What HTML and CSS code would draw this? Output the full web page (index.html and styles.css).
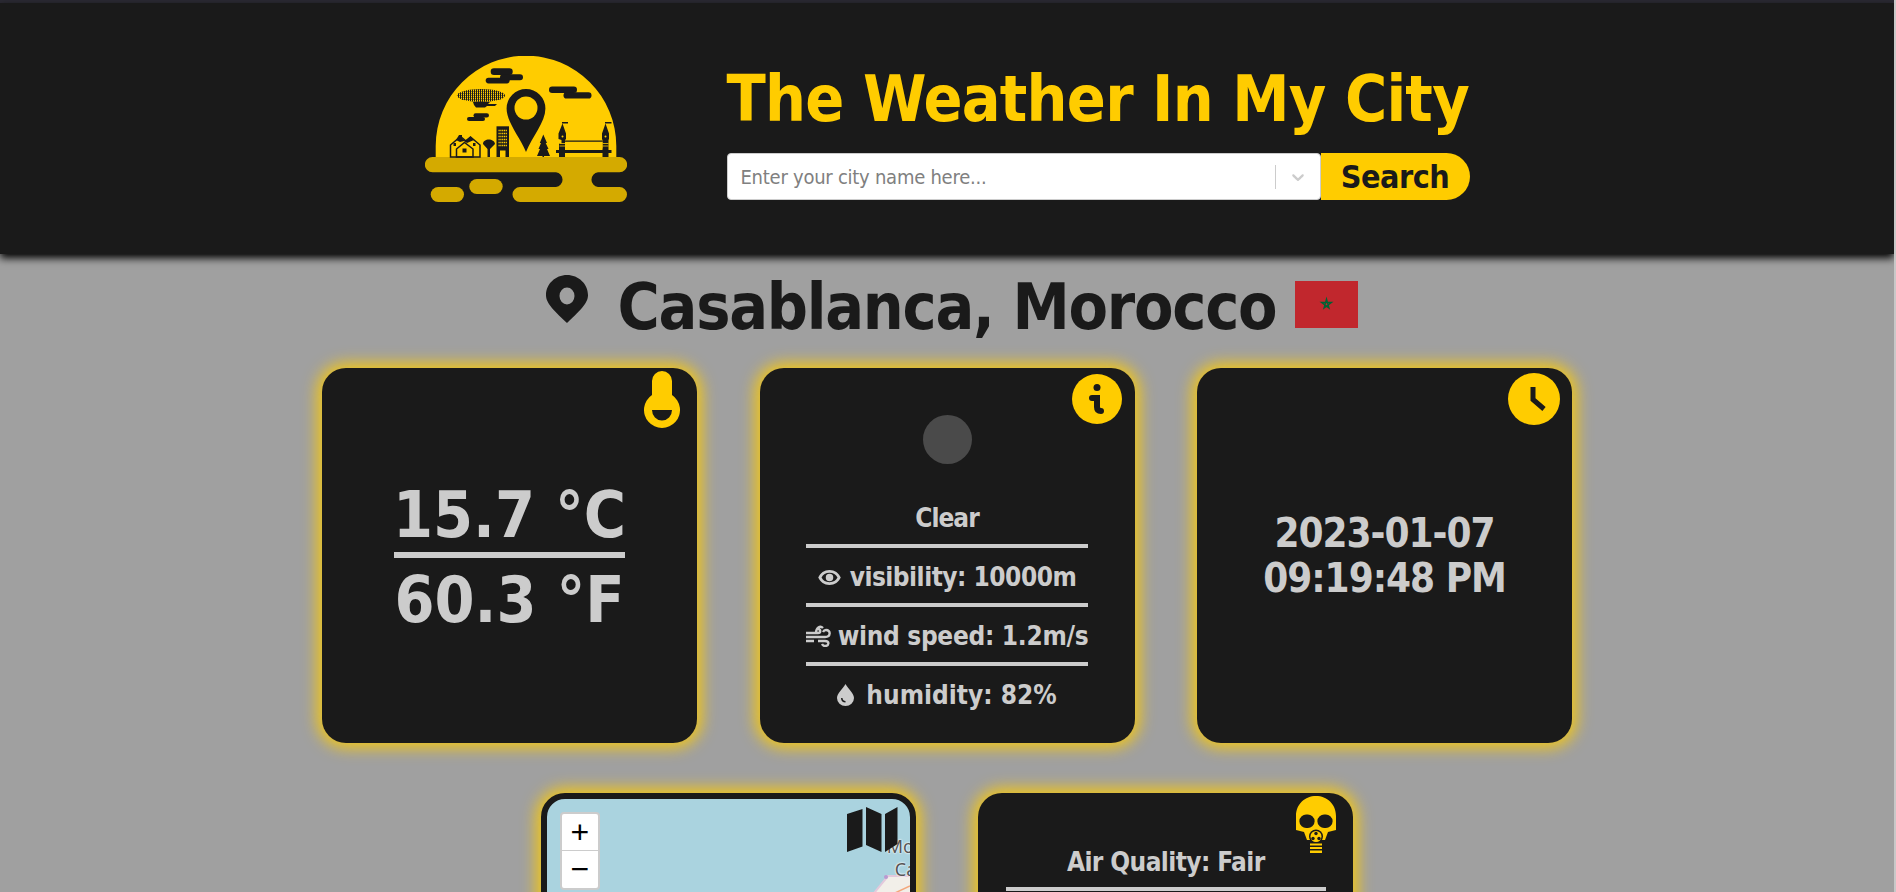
FILE: index.html
```html
<!DOCTYPE html>
<html lang="en">
<head>
<meta charset="utf-8">
<title>The Weather In My City</title>
<link rel="stylesheet" href="styles.css">
</head>
<body>
<div class="topbar"></div>
<header class="header">
  <svg class="logo" viewBox="25 26 202 146" width="202" height="146" aria-label="logo">
    <defs>
      <pattern id="hatch" width="2" height="2" patternUnits="userSpaceOnUse"><rect width="2" height="2" fill="#fc0"/><rect width="1" height="2" fill="#1a1a1a"/><rect y="1" width="2" height="1" fill="#1a1a1a" opacity=".45"/></pattern>
    </defs>
    <path class="l-y" d="M35.7 127V116A90.3 90.3 0 0 1 216.3 116V127Z"/>
    <path class="l-g" d="M32.5 127H219.5A7.6 7.6 0 0 1 219.5 142.3H198A7.4 7.4 0 0 0 198 157H219.5A7.5 7.5 0 0 1 219.5 172H120A7.5 7.5 0 0 1 120 157H156A7.4 7.4 0 0 0 156 142.3H32.5A7.6 7.6 0 0 1 32.5 127Z"/>
    <rect class="l-g" x="30.7" y="157" width="33.3" height="15" rx="7.5"/>
    <rect class="l-g" x="69.3" y="149" width="33.4" height="15" rx="7.5"/>
    <path class="l-d" d="M126 122C120 107 106.6 92 106.6 78.5A19.4 19.4 0 0 1 145.4 78.5C145.4 92 132 107 126 122Z"/>
    <circle class="l-y" cx="126" cy="78" r="11.5"/>
    <rect class="l-d" x="90.700" y="38.300" width="22" height="6.700" rx="3.300"/>
    <rect class="l-d" x="85.700" y="47.700" width="24" height="5.700" rx="2.800"/>
    <rect class="l-d" x="100" y="44.300" width="23" height="6" rx="3"/>
    <rect class="l-d" x="149" y="56.500" width="28" height="6.500" rx="3.200"/>
    <rect class="l-d" x="163.500" y="62.300" width="28" height="6.200" rx="3.100"/>
    <rect class="l-d" x="73.500" y="83.300" width="15.500" height="4.200" rx="2.100"/>
    <rect class="l-d" x="67" y="87" width="18" height="4" rx="2"/>
    <ellipse cx="81" cy="65.500" rx="24" ry="6.500" fill="url(#hatch)"/>
    <path class="l-d" d="M73 72H90L88 74H97L95 76H87L85 77.500H76L74 75Z"/>
    <path class="l-s" d="M50.500 127V115L60.500 106.500L66 111L70.500 107L80 115V127Z"/>
    <path class="l-d" d="M59 105H62V108.500L65 110.500L70.500 106.500L74 110L67 113L64 111L60 112L56 110Z"/>
    <path class="l-s" d="M56.500 127V119L64.500 112.500L73 119V127Z"/>
    <rect class="l-d" x="62.500" y="118.500" width="4" height="4"/>
    <rect class="l-d" x="53.500" y="113" width="2.500" height="3"/>
    <rect class="l-d" x="73" y="113" width="2.500" height="3"/>
    <path class="l-d" d="M87.500 127V119L83 114C83 108 94.500 108 95 114L90 119V127Z"/>
    <rect class="l-d" x="96.500" y="96.300" width="12.500" height="30.700"/>
    <path class="l-win" d="M98.500 100.500H107M98.500 103.500H107M98.500 106.500H107M98.500 109.500H107M98.500 112.500H107M98.500 115.500H107"/>
    <rect class="l-y" x="100" y="120.500" width="5.500" height="6.500"/>
    <path class="l-d" d="M143.300 104.500L147 113L145.700 113L148.500 119L147 119L150 126H144V127H142.500V126H137L140 119L138.500 119L141 113L139.800 113Z"/>
    <path class="l-d" d="M159 127V123H156V120H159V113.500H161.500V110L158.500 109V103.500L162.500 93.500L166 103.500V109L165 110V120H202.500V110L202 109V103.500L205.500 93.500L209 103.500V109L208.500 110V120H211.500V123H208.500V127H202.500V123H165V127Z"/>
    <rect class="l-y" x="165" y="112" width="37.500" height="6.500"/>
    <path class="l-d" d="M165 110.500H202.500V111.800H165Z M162 92V93.500H168V92Z M205 92V93.500H211.500V92Z"/>
    <circle class="l-y" cx="162.500" cy="106.500" r="1"/>
    <circle class="l-y" cx="205.500" cy="106.500" r="1"/>
    <path class="l-st" d="M159.500 113.500H165M159.500 116H165M202.500 113.500H208.500M202.500 116H208.500"/>
  </svg>
  <div class="brand">
    <h1 class="title">The Weather In My City</h1>
    <form class="search">
      <div class="select">
        <span class="placeholder">Enter your city name here...</span>
        <span class="sep"></span>
        <svg class="chev" viewBox="0 0 20 20" width="20" height="20"><path d="M4.516 7.548c.436-.446 1.043-.481 1.576 0L10 11.295l3.908-3.747c.533-.481 1.141-.446 1.574 0 .436.445.408 1.197 0 1.615-.406.418-4.695 4.502-4.695 4.502a1.095 1.095 0 0 1-1.576 0S4.924 9.581 4.516 9.163c-.409-.418-.436-1.17 0-1.615z"/></svg>
      </div>
      <button class="btn" type="button">Search</button>
    </form>
  </div>
</header>
<main class="main">
  <h2 class="city">
    <svg class="city-pin" viewBox="0 0 42 48" width="42" height="48"><path fill-rule="evenodd" d="M21 0C9.500 0 0 9 0 20C0 27 5 33 21 48C37 33 42 27 42 20C42 9 32.500 0 21 0ZM21 12.500A7.500 8.500 0 1 1 21 29.500A7.500 8.500 0 1 1 21 12.500Z"/></svg>
    <span class="city-name">Casablanca, Morocco</span>
    <svg class="flag" viewBox="0 0 63 47" width="63" height="47"><rect width="63" height="47" fill="#c1272d"/><path d="M31.500 18L34 27L26.500 21.500H36.500L29 27Z" fill="none" stroke="#006233" stroke-width="1.300"/></svg>
  </h2>
  <section class="row">
    <article class="card temp">
      <svg class="ico ico-temp" viewBox="0 0 36 57" width="36" height="57"><path fill-rule="evenodd" d="M8 24V10A10 10 0 0 1 28 10V24A18 18 0 1 1 8 24ZM8 39A10 10.500 0 0 0 28 39Z"/></svg>
      <div class="temp-val">15.7 °C</div>
      <hr class="rule rule-temp">
      <div class="temp-val">60.3 °F</div>
    </article>
    <article class="card info">
      <svg class="ico ico-info" viewBox="0 0 50 50" width="50" height="50"><circle cx="25" cy="25" r="25" fill="#fc0"/><circle cx="25" cy="13.500" r="3.500" fill="#1a1a1a"/><path d="M20 24H25V33Q25 37 29 37" fill="none" stroke="#1a1a1a" stroke-width="6" stroke-linecap="round"/></svg>
      <div class="sun"></div>
      <div class="line first">Clear</div>
      <hr class="rule">
      <div class="line vis"><svg class="li li-eye" viewBox="0 0 24 16" width="23" height="15"><path fill-rule="evenodd" d="M12 0C6.500 0 2 3.200 0 8C2 12.800 6.500 16 12 16S22 12.800 24 8C22 3.200 17.500 0 12 0ZM12 3C16 3 19 5 20.500 8C19 11 16 13 12 13S5 11 3.500 8C5 5 8 3 12 3ZM12 4A4 4 0 1 0 12 12A4 4 0 0 0 12 4Z"/></svg>visibility: 10000m</div>
      <hr class="rule">
      <div class="line wind"><svg class="li li-wind" viewBox="0 0 25 22" width="25" height="22"><path d="M0 8H12C15 8 15 4 12 4M0 12H19C25 12 25 5 20 5Q18 5 17 7M0 16H8M12 16H19C24 16 23 21 19 21Q17 21 16 19M10 8C10 3 14 0 17 3" fill="none" stroke="currentColor" stroke-width="2.400"/></svg>wind speed: 1.2m/s</div>
      <hr class="rule">
      <div class="line hum"><svg class="li li-drop" viewBox="0 0 17 22" width="17" height="22"><path fill-rule="evenodd" d="M8.500 0C6 5 0 9 0 14A8.500 8 0 0 0 17 14C17 9 11 5 8.500 0ZM4 14C4 17 6 18.500 8.500 18.500V17C7 17 5.500 16 5.500 14Z"/></svg>humidity: 82%</div>
    </article>
    <article class="card clock">
      <svg class="ico ico-clock" viewBox="0 0 52 52" width="52" height="52"><circle cx="26" cy="26" r="26" fill="#fc0"/><path d="M25 14V26.500L36 36" fill="none" stroke="#1a1a1a" stroke-width="5"/></svg>
      <div class="clock-val">2023-01-07<br>09:19:48 PM</div>
    </article>
  </section>
  <section class="row">
    <article class="card map">
      <svg class="map-land" viewBox="0 0 40 24" width="40" height="24"><path d="M40 2L18 2L0 24H40Z" fill="#f2efe9"/><path d="M40 2L18 2L0 24" fill="none" stroke="#e3c9dc" stroke-width="2"/><path d="M14 24L40 12" fill="none" stroke="#f3a77c" stroke-width="1.500"/><circle cx="16" cy="3" r="2" fill="#b99ad0"/></svg>
      <span class="map-label ml-1">Mohammedia</span>
      <span class="map-label ml-2">Casablanca</span>
      <div class="zoom-ctl"><a class="zb">+</a><a class="zb">−</a></div>
      <svg class="ico ico-map" viewBox="0 0 51 46" width="51" height="46"><path d="M0 7L15.500 2V39.500L0 45ZM19 0L34.500 7V45L19 38ZM38 7L50.500 0V37L38 45Z"/></svg>
    </article>
    <article class="card air">
      <svg class="ico ico-mask" viewBox="0 0 40 57" width="40" height="57"><path fill-rule="evenodd" d="M20 0C9 0 0 8 0 20V34L8 36L11 44H29L32 36L40 34V20C40 8 31 0 20 0ZM11 18.500A6.800 6.800 0 1 1 11 32A6.800 6.800 0 1 1 11 18.500ZM29 18.500A6.800 6.800 0 1 1 29 32A6.800 6.800 0 1 1 29 18.500Z"/><circle cx="20" cy="40.500" r="7" fill="#1a1a1a"/><circle cx="20" cy="40.500" r="5.500"/><circle cx="20" cy="37.500" r="1.700" fill="#1a1a1a"/><circle cx="17" cy="42.500" r="1.700" fill="#1a1a1a"/><circle cx="23" cy="42.500" r="1.700" fill="#1a1a1a"/><path d="M14 47.500H26V49.500H14ZM14 51H26V53H14ZM14 54.500H26V57H14Z"/></svg>
      <div class="aq-title">Air Quality: Fair</div>
      <hr class="rule rule-aq">
    </article>
  </section>
</main>
</body>
</html>
```
FILE: styles.css
```css
* { box-sizing: border-box; }
html, body { margin: 0; height: 892px; overflow: hidden; }
body {
  background: #a0a0a0;
  border-right: 2px solid #c8c8c8;
  font-family: "DejaVu Sans Condensed", "DejaVu Sans", sans-serif;
  color: #1a1a1a;
}
.topbar { height: 3px; background: #2b2a33; }
.header {
  height: 251px;
  background: #1a1a1a;
  box-shadow: 0 4px 8px #000;
  display: flex;
  justify-content: center;
  align-items: flex-start;
  gap: 100px;
  position: relative;
}
.logo { margin-top: 53px; flex: none; }
.l-y { fill: #fc0; }
.l-g { fill: #d4aa00; }
.l-d { fill: #1a1a1a; }
.l-s { fill: none; stroke: #1a1a1a; stroke-width: 1.5; }
.l-st { fill: none; stroke: #fc0; stroke-width: .8; }
.l-win { fill: none; stroke: #fc0; stroke-width: 1.5; stroke-dasharray: 1.2 .6; }
.brand { width: 743px; display: flex; flex-direction: column; }
.title {
  margin: 57px 0 0;
  font-size: 64px;
  line-height: 78px;
  font-weight: 700;
  letter-spacing: -.75px;
  color: #fc0;
  white-space: nowrap;
}
.search { display: flex; height: 47px; margin-top: 15px; }
.select {
  width: 594px;
  background: #fff;
  border: 1px solid #ccc;
  border-radius: 4px;
  display: flex;
  align-items: center;
  padding-left: 13px;
}
.placeholder { flex: 1; font-size: 20px; letter-spacing: -.25px; color: #808080; }
.sep { width: 1px; height: 24px; background: #ccc; }
.chev { fill: #ccc; margin: 0 12px; }
.btn {
  flex: 1;
  border: 0;
  padding: 0;
  background: #fc0;
  color: #1a1a1a;
  border-radius: 0 24px 24px 0;
  font: 700 32px "DejaVu Sans Condensed", sans-serif;
  letter-spacing: -.5px;
}
.main { display: flex; flex-direction: column; align-items: center; }
.city {
  margin: 14px 0 0 10px;
  height: 100px;
  display: flex;
  align-items: flex-start;
  font-size: 64px;
  line-height: 78px;
  font-weight: 700;
  letter-spacing: -1.25px;
  color: #1a1a1a;
}
.city-pin { margin-top: 7px; fill: #1a1a1a; }
.city-name { margin-left: 30px; }
.flag { margin: 13px 0 0 19px; }
.row { display: flex; justify-content: center; gap: 62.5px; margin-bottom: 50px; }
.card {
  width: 375px;
  height: 375px;
  flex: none;
  border-radius: 24px;
  background: #1a1a1a;
  color: #ccc;
  box-shadow: 0 0 15px 5px rgba(255, 204, 0, .85);
  position: relative;
  display: flex;
  flex-direction: column;
  align-items: center;
  justify-content: center;
  font-weight: 700;
}
.ico { position: absolute; fill: #fc0; }
.ico-temp { top: 3px; right: 17px; }
.ico-info { top: 6px; right: 13px; }
.ico-clock { top: 5px; right: 12px; }
.ico-map { top: 8px; right: 12px; fill: #1a1a1a; }
.ico-mask { top: 3px; right: 17px; }
.temp { padding-top: 3px; }
.temp-val { font-size: 64px; line-height: 78px; }
.rule { border: 0; margin: 0; height: 4px; width: 282px; background: #ccc; flex: none; }
.rule-temp { height: 6px; width: 231px; margin: -2px 0 3px; }
.info { justify-content: flex-start; padding-top: 47px; }
.sun { width: 49px; height: 49px; border-radius: 50%; background: #4a4a4a; margin-bottom: 25px; flex: none; }
.line { height: 55px; padding-top: 3px; font-size: 26px; line-height: 52px; white-space: nowrap; display: flex; align-items: center; }
.first { letter-spacing: -1px; }
.vis { letter-spacing: -.5px; gap: 9px; }
.wind { letter-spacing: -.3px; gap: 7px; }
.hum { gap: 12px; }
.li { fill: #ccc; color: #ccc; flex: none; }
.clock-val { font-size: 40px; line-height: 45px; letter-spacing: -1px; text-align: center; }
.map { border: 6px solid #1a1a1a; background: #aad3df; overflow: hidden; justify-content: flex-start; align-items: flex-start; }
.zoom-ctl {
  position: absolute;
  top: 13px;
  left: 13px;
  width: 40px;
  border: 2px solid rgba(0, 0, 0, .2);
  border-radius: 4px;
  background: #fff;
  display: flex;
  flex-direction: column;
}
.zb {
  height: 37px;
  font: 400 32px/36px "Liberation Sans", sans-serif;
  color: #000;
  text-align: center;
}
.zb:first-child { border-bottom: 1px solid #ccc; }
.map-land { position: absolute; left: 323px; top: 75px; }
.map-label {
  position: absolute;
  font: 400 18px "Noto Sans", sans-serif;
  color: #555;
  white-space: nowrap;
  text-shadow: 0 0 2px #fff, 0 0 2px #fff;
}
.ml-1 { top: 35px; left: 340px; }
.ml-2 { top: 58px; left: 348px; }
.air { justify-content: flex-start; padding-top: 53px; }
.aq-title { font-size: 26px; line-height: 33px; letter-spacing: -.6px; }
.rule-aq { width: 320px; margin-top: 8px; }
```
